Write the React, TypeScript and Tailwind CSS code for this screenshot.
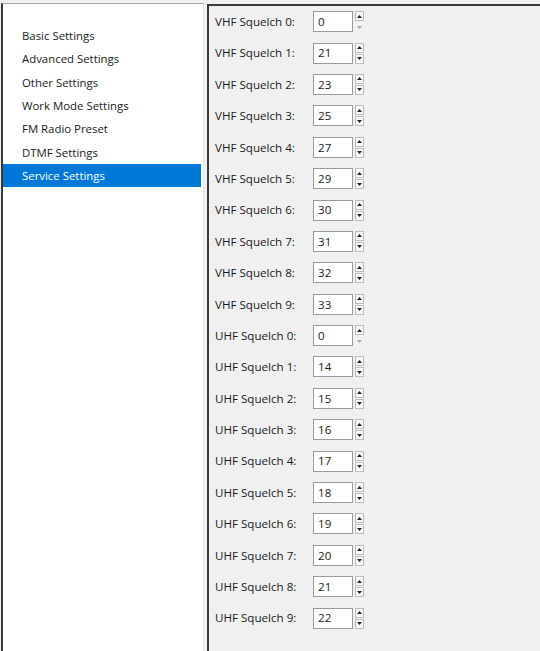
const menu = [
  "Basic Settings",
  "Advanced Settings",
  "Other Settings",
  "Work Mode Settings",
  "FM Radio Preset",
  "DTMF Settings",
  "Service Settings",
];

const vhf = [0, 21, 23, 25, 27, 29, 30, 31, 32, 33];
const uhf = [0, 14, 15, 16, 17, 18, 19, 20, 21, 22];

function Spinner({ atMin }: { atMin: boolean }) {
  return (
    <div className="ml-[2px] flex flex-col gap-[1px]">
      <div className="flex h-[10px] w-[9px] items-center justify-center border border-[#bcbcbc] bg-[#f7f7f7]">
        <svg width="5" height="3" viewBox="0 0 5 3">
          <path d="M0 3 L2.5 0 L5 3 Z" fill="#222" />
        </svg>
      </div>
      <div
        className={
          atMin
            ? "flex h-[10px] w-[9px] items-center justify-center"
            : "flex h-[10px] w-[9px] items-center justify-center border border-[#bcbcbc] bg-[#f7f7f7]"
        }
      >
        <svg width="5" height="3" viewBox="0 0 5 3">
          <path d="M0 0 L5 0 L2.5 3 Z" fill={atMin ? "#a8a8a8" : "#222"} />
        </svg>
      </div>
    </div>
  );
}

function Row({ label, value }: { label: string; value: number }) {
  return (
    <div className="flex h-[31.4px] items-center">
      <span className="w-[98px] text-[11.6px] text-[#1a1a1a]">{label}</span>
      <div className="flex h-[21px] w-[40px] items-center border border-[#9a9a9a] bg-white pl-[4px] text-[11.6px] text-[#1a1a1a]">
        {value}
      </div>
      <Spinner atMin={value === 0} />
    </div>
  );
}

export default function App() {
  return (
    <div
      className="flex h-[651px] w-[540px] overflow-hidden bg-[#f0f0f0] pt-[3px]"
      style={{ fontFamily: '"Segoe UI", "Open Sans", sans-serif' }}
    >
      <div className="ml-[1px] flex w-[203px] flex-col border-t border-l-2 border-r border-t-[#a8a8a8] border-l-[#3a3a3a] border-r-[#e6e6e6] bg-white pt-[20px]">
        {menu.map((m) => (
          <div
            key={m}
            className={
              m === "Service Settings"
                ? "mr-[2px] flex h-[23.3px] items-center bg-[#0078d7] pl-[19px] text-[11.4px] text-white"
                : "flex h-[23.3px] items-center pl-[19px] text-[11.4px] text-[#1a1a1a]"
            }
          >
            {m}
          </div>
        ))}
      </div>
      <div className="ml-[3px] mt-[1px] flex flex-1 flex-col border-t-2 border-l-2 border-[#3a3a3a] pl-[6px]">
        {vhf.map((v, i) => (
          <Row key={"v" + i} label={`VHF Squelch ${i}:`} value={v} />
        ))}
        {uhf.map((v, i) => (
          <Row key={"u" + i} label={`UHF Squelch ${i}:`} value={v} />
        ))}
      </div>
    </div>
  );
}
